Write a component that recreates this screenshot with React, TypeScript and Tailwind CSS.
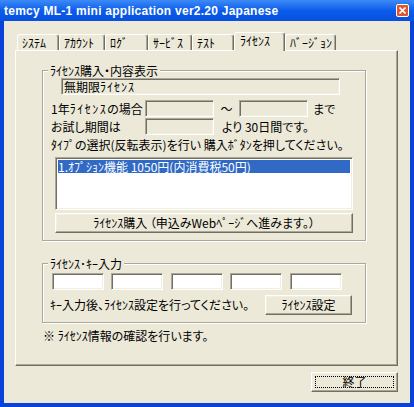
import React from "react";

const sunken =
  "border border-t-[#ACA899] border-l-[#ACA899] border-r-white border-b-white shadow-[inset_1px_1px_0_#716F64,inset_-1px_-1px_0_#F1EFE2]";
const raised =
  "border border-t-white border-l-white border-r-[#716F64] border-b-[#716F64] shadow-[inset_-1px_-1px_0_#ACA899,inset_1px_1px_0_#F1EFE2] bg-[#ECE9D8]";
const etched =
  "border border-[#ACA899] shadow-[inset_1px_1px_0_#fff,1px_1px_0_#fff]";

const tabs = [
  { label: "ｼｽﾃﾑ", w: "w-[42px]" },
  { label: "ｱｶｳﾝﾄ", w: "w-[46px]" },
  { label: "ﾛｸﾞ", w: "w-[43px]" },
  { label: "ｻｰﾋﾞｽ", w: "w-[44px]" },
  { label: "ﾃｽﾄ", w: "w-[42px]" },
  { label: "ﾗｲｾﾝｽ", w: "w-[51px]", active: true },
  { label: "ﾊﾞｰｼﾞｮﾝ", w: "w-[51px]" },
];

const App: React.FC = () => {
  return (
    <div className="w-[414px] h-[407px] bg-[#0842D8] flex flex-col font-['Noto_Sans_CJK_JP',sans-serif] text-[12px] text-black [font-feature-settings:'palt']">
      {/* title bar */}
      <div className="h-[21px] flex items-center justify-between pl-[4px] pr-[5px] bg-gradient-to-b from-[#3D8AF7] via-[#0A5CEB] to-[#0850E0]">
        <span className="font-['Liberation_Sans',sans-serif] font-bold text-[12px] text-white leading-none tracking-[0.25px]">
          temcy ML-1 mini application ver2.20 Japanese
        </span>
        <div className="w-[13px] h-[13px] rounded-[2px] border border-white bg-[#E2542B] flex items-center justify-center">
          <svg width="7" height="7" viewBox="0 0 7 7">
            <path d="M0.5 0.5 L6.5 6.5 M6.5 0.5 L0.5 6.5" stroke="#fff" strokeWidth="1.6" />
          </svg>
        </div>
      </div>

      {/* client area */}
      <div className="flex-1 mx-[4px] mb-[4px] bg-[#ECE9D8] flex flex-col pt-[11px] pl-[11px]">
        {/* tabs */}
        <div className="flex items-end h-[18px] pl-[2px]">
          {tabs.map((t) =>
            t.active ? (
              <div
                key={t.label}
                className={`relative z-10 ${t.w} h-[19px] -mb-[1px] bg-[#ECE9D8] border border-b-0 border-t-white border-l-white border-r-[#716F64] shadow-[inset_-1px_0_0_#ACA899] rounded-t-[3px] pl-[5px] pb-[3px] flex items-center whitespace-nowrap`}
              >
                {t.label}
              </div>
            ) : (
              <div
                key={t.label}
                className={`${t.w} h-[16px] border border-b-0 border-t-white border-l-white border-r-[#716F64] shadow-[inset_-1px_0_0_#ACA899] rounded-t-[3px] pl-[4px] flex items-center whitespace-nowrap`}
              >
                {t.label}
              </div>
            )
          )}
        </div>

        {/* tab panel */}
        <div className="w-[383px] h-[316px] border border-t-white border-l-white border-r-[#716F64] border-b-[#716F64] shadow-[inset_-1px_-1px_0_#ACA899] pl-[26px] pt-[13px]">
          <fieldset className={`w-[324px] ${etched} pb-[7px]`}>
            <legend className="ml-[5px] px-[2px] leading-[13px] bg-[#ECE9D8]">ﾗｲｾﾝｽ購入・内容表示</legend>
            <div className={`ml-[18px] mt-[1px] w-[279px] h-[17px] ${sunken} bg-[#ECE9D8] pl-[2px] leading-[15px]`}>
              無期限<span className="tracking-[1px]">ﾗｲｾﾝｽ</span>
            </div>
            <div className="flex items-center mt-[5px] h-[17px] whitespace-nowrap">
              <span className="ml-[8px] w-[94px]">
                1年<span className="tracking-[1.5px]">ﾗｲｾﾝｽ</span>の場合
              </span>
              <div className={`w-[69px] h-[17px] ${sunken} bg-[#ECE9D8]`} />
              <span className="w-[25px] text-center">～</span>
              <div className={`w-[69px] h-[17px] ${sunken} bg-[#ECE9D8]`} />
              <span className="ml-[5px]">まで</span>
            </div>
            <div className="flex items-center mt-[1px] h-[17px] whitespace-nowrap">
              <span className="ml-[8px] w-[94px]">お試し期間は</span>
              <div className={`w-[69px] h-[17px] ${sunken} bg-[#ECE9D8]`} />
              <span className="ml-[8px]">より 30日間です。</span>
            </div>
            <div className="mt-[2px] ml-[8px] leading-[16px] whitespace-nowrap">
              ﾀｲﾌﾟの選択(反転表示)を行い 購入ﾎﾞﾀﾝを押してください。
            </div>
            <div className={`mt-[4px] ml-[12px] w-[298px] h-[53px] ${sunken} bg-white p-[2px]`}>
              <div className="h-[13px] leading-[13px] bg-[#316AC5] text-white whitespace-nowrap">
                1.ｵﾌﾟｼｮﾝ機能 1050円(内消費税50円)
              </div>
            </div>
            <button className={`mt-[3px] ml-[12px] w-[298px] h-[20px] ${raised} flex items-center justify-center whitespace-nowrap`}>
              ﾗｲｾﾝｽ購入 （申込みWebﾍﾟｰｼﾞへ進みます。）
            </button>
          </fieldset>

          <fieldset className={`mt-[16px] w-[324px] ${etched} pb-[7px]`}>
            <legend className="ml-[5px] px-[2px] leading-[13px] bg-[#ECE9D8]">ﾗｲｾﾝｽ･ｷｰ入力</legend>
            <div className="flex mt-[3px] ml-[9px] gap-[7px]">
              <input className={`w-[52px] h-[17px] ${sunken} bg-white`} />
              <input className={`w-[52px] h-[17px] ${sunken} bg-white`} />
              <input className={`ml-[1px] w-[52px] h-[17px] ${sunken} bg-white`} />
              <input className={`w-[52px] h-[17px] ${sunken} bg-white`} />
              <input className={`ml-[1px] w-[52px] h-[17px] ${sunken} bg-white`} />
            </div>
            <div className="flex items-center mt-[5px] h-[20px] whitespace-nowrap">
              <span className="ml-[7px] w-[215px]">ｷｰ入力後、ﾗｲｾﾝｽ設定を行ってください。</span>
              <button className={`w-[87px] h-[20px] ${raised} flex items-center justify-center`}>
                ﾗｲｾﾝｽ設定
              </button>
            </div>
          </fieldset>

          <div className="mt-[5px] ml-[1px] leading-[16px] whitespace-nowrap">※ ﾗｲｾﾝｽ情報の確認を行います。</div>
        </div>

        {/* footer */}
        <div className="flex justify-end w-[383px] mt-[6px]">
          <button className={`w-[87px] h-[20px] ${raised} p-[3px]`}>
            <span className="flex items-center justify-center w-full h-full border border-dotted border-black leading-none">
              終了
            </span>
          </button>
        </div>
      </div>
    </div>
  );
};

export default App;
